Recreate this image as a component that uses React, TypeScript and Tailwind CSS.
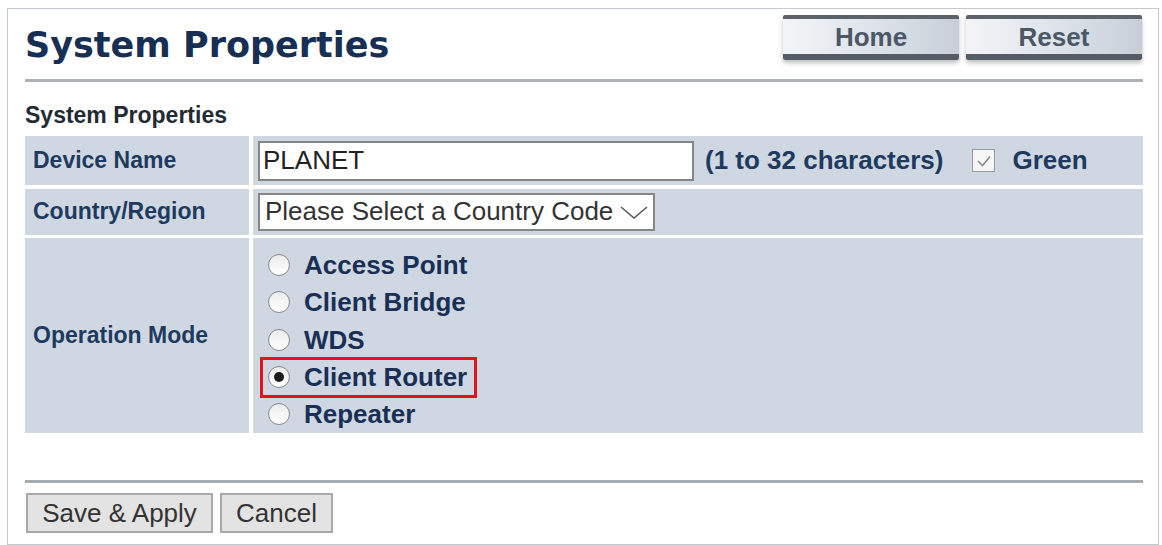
import React from "react";

const modes = ["Access Point", "Client Bridge", "WDS", "Client Router", "Repeater"];

function HeaderButton({ label }: { label: string }) {
  return (
    <button className="relative w-[176px] h-[45px] flex items-center justify-center bg-gradient-to-r from-[#f3f5f7] via-[#dfe4ea] to-[#c6cfd9] border-t-[4px] border-b-[6px] border-t-[#5c626a] border-b-[#565c64] rounded-[2px] shadow-[0_3px_4px_rgba(0,0,0,0.25)] text-[26px] font-bold text-[#4b5868] leading-none">
      {label}
    </button>
  );
}

function Radio({ checked }: { checked?: boolean }) {
  return (
    <span className="w-[22px] h-[22px] rounded-full border-[1.5px] border-[#8a8a8a] bg-gradient-to-b from-[#ececec] to-white flex items-center justify-center shrink-0">
      {checked && <span className="w-[10px] h-[10px] rounded-full bg-[#1c1c1c]" />}
    </span>
  );
}

export default function App() {
  return (
    <div className="w-[1162px] h-[545px] bg-white pl-[7px] pt-[8px] font-['Liberation_Sans',Arial,sans-serif]">
      <div className="w-[1152px] h-[537px] border border-[#c4c9cf] pl-[17px] pr-[15px] pt-[6px]">
        {/* page heading with navigation buttons */}
        <div className="flex h-[64px]">
          <h1 className="mt-[10px] text-[35px] leading-[40px] font-bold text-[#172f55] font-['DejaVu_Sans',Verdana,sans-serif]">
            System Properties
          </h1>
          <div className="ml-auto flex gap-[7px] pr-[1px]">
            <HeaderButton label="Home" />
            <HeaderButton label="Reset" />
          </div>
        </div>
        <div className="h-[3px] bg-[#aab1b9]" />

        <div className="mt-[20px] text-[23px] leading-[26px] font-bold text-[#222a33]">System Properties</div>

        {/* settings table */}
        <div className="mt-[8px] grid grid-cols-[224px_1fr] gap-x-[4px] gap-y-[3.5px] text-[#1f3a5f]">
          <div className="h-[49px] bg-[#cfd8e2] flex items-center pl-[8px] text-[23px] font-bold">Device Name</div>
          <div className="h-[49px] bg-[#cfd8e2] flex items-center pl-[5px]">
            <input
              readOnly
              value="PLANET"
              className="w-[436px] h-[40px] bg-white border-2 border-[#858585] px-[3px] text-[26px] text-[#222] outline-none"
            />
            <span className="ml-[11px] text-[26px] font-bold whitespace-nowrap">(1 to 32 characters)</span>
            <span className="ml-[29px] w-[23px] h-[23px] shrink-0 border-[1.5px] border-[#9a9a9a] bg-[#f6f6f6] flex items-center justify-center">
              <svg width="16" height="14" viewBox="0 0 16 14">
                <path d="M2 7 L6.5 11.5 L14 2.5" fill="none" stroke="#8a8a8a" strokeWidth="1.6" />
              </svg>
            </span>
            <span className="ml-[17px] text-[26px] font-bold">Green</span>
          </div>

          <div className="h-[46px] bg-[#cfd8e2] flex items-center pl-[8px] text-[23px] font-bold">Country/Region</div>
          <div className="h-[46px] bg-[#cfd8e2] flex items-center pl-[5px]">
            <div className="w-[397px] h-[38px] bg-white border-2 border-[#858585] flex items-center pl-[5px] pr-[4px] text-[26px] text-[#333]">
              <span className="whitespace-nowrap">Please Select a Country Code</span>
              <svg className="ml-auto" width="30" height="16" viewBox="0 0 30 16">
                <path d="M2 3 L15 14 L28 3" fill="none" stroke="#555" strokeWidth="1.5" />
              </svg>
            </div>
          </div>

          <div className="h-[195px] bg-[#cfd8e2] flex items-center pl-[8px] text-[23px] font-bold">Operation Mode</div>
          <div className="h-[195px] bg-[#cfd8e2] pl-[15px] pt-[8px] flex flex-col">
            {modes.map((m) => {
              const on = m === "Client Router";
              return (
                <div key={m} className="h-[37.5px] flex items-center">
                  <div className="relative flex items-center gap-[14px]">
                    <Radio checked={on} />
                    <span className="text-[26px] font-bold text-[#1a2f55] leading-[30px]">{m}</span>
                    {on && (
                      <span className="absolute -left-[8px] -right-[10px] -top-[5px] -bottom-[6px] border-[3px] border-[#e3141c]" />
                    )}
                  </div>
                </div>
              );
            })}
          </div>
        </div>

        <div className="mt-[47px] h-[3px] bg-[#a4abb3]" />

        {/* form actions */}
        <div className="mt-[10px] flex gap-[7px] pl-[1px]">
          <button className="w-[187px] h-[40px] bg-[#e3e3e3] border-2 border-[#a9a9a9] text-[26px] text-[#333] leading-none">
            Save &amp; Apply
          </button>
          <button className="w-[113px] h-[40px] bg-[#e3e3e3] border-2 border-[#a9a9a9] text-[26px] text-[#333] leading-none">
            Cancel
          </button>
        </div>
      </div>
    </div>
  );
}
